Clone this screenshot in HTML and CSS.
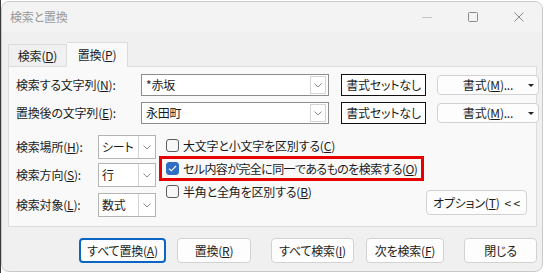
FILE: index.html
```html
<!DOCTYPE html>
<html lang="ja">
<head>
    <meta charset="UTF-8">
    <title>検索と置換</title>
    <link rel="stylesheet" href="styles.css">
</head>
<body>
    <div class="window">
        <div class="titlebar">
            <span class="title">検索と置換</span>
            <div class="controls">
                <span class="ctl"><svg width="10" height="10" viewBox="0 0 10 10"><path d="M0 5.5h10" stroke="#c4c4c4" stroke-width="1"/></svg></span>
                <span class="ctl"><svg width="10" height="10" viewBox="0 0 10 10"><rect x="0.5" y="0.5" width="9" height="9" rx="1" fill="none" stroke="#8a8a8a"/></svg></span>
                <span class="ctl"><svg width="10" height="10" viewBox="0 0 10 10"><path d="M0.5 0.5l9 9M9.5 0.5l-9 9" stroke="#8a8a8a" stroke-width="1"/></svg></span>
            </div>
        </div>

        <div class="main">
            <div class="tabs">
                <div class="tab">検索(<u>D</u>)</div>
                <div class="tab active">置換(<u>P</u>)</div>
            </div>

            <div class="panel">
                <div class="text-rows">
                    <div class="label">検索する文字列(<u>N</u>):</div>
                    <div class="combo"><span class="combo-text">*赤坂</span><span class="combo-arrow"><svg width="8" height="5" viewBox="0 0 8 5"><path d="M0.5 0.5l3.5 3.5 3.5-3.5" fill="none" stroke="#8a8a8a"/></svg></span></div>
                    <div class="fmt-none">書式セットなし</div>
                    <div class="fmt-btn"><span>書式(<u>M</u>)...</span><span class="caret"></span></div>

                    <div class="label">置換後の文字列(<u>E</u>):</div>
                    <div class="combo"><span class="combo-text">永田町</span><span class="combo-arrow"><svg width="8" height="5" viewBox="0 0 8 5"><path d="M0.5 0.5l3.5 3.5 3.5-3.5" fill="none" stroke="#8a8a8a"/></svg></span></div>
                    <div class="fmt-none">書式セットなし</div>
                    <div class="fmt-btn"><span>書式(<u>M</u>)...</span><span class="caret"></span></div>
                </div>

                <div class="options">
                    <div class="selects">
                        <div class="sel-row">
                            <div class="sel-label">検索場所(<u>H</u>):</div>
                            <div class="select"><span class="select-text">シート</span><span class="select-arrow"><svg width="8" height="5" viewBox="0 0 8 5"><path d="M0.5 0.5l3.5 3.5 3.5-3.5" fill="none" stroke="#8a8a8a"/></svg></span></div>
                        </div>
                        <div class="sel-row">
                            <div class="sel-label">検索方向(<u>S</u>):</div>
                            <div class="select"><span class="select-text">行</span><span class="select-arrow"><svg width="8" height="5" viewBox="0 0 8 5"><path d="M0.5 0.5l3.5 3.5 3.5-3.5" fill="none" stroke="#8a8a8a"/></svg></span></div>
                        </div>
                        <div class="sel-row">
                            <div class="sel-label">検索対象(<u>L</u>):</div>
                            <div class="select"><span class="select-text">数式</span><span class="select-arrow"><svg width="8" height="5" viewBox="0 0 8 5"><path d="M0.5 0.5l3.5 3.5 3.5-3.5" fill="none" stroke="#8a8a8a"/></svg></span></div>
                        </div>
                    </div>

                    <div class="checks">
                        <div class="check first"><span class="box"></span>大文字と小文字を区別する(<u>C</u>)</div>
                        <div class="check marked"><span class="box on"><svg width="9" height="7" viewBox="0 0 9 7"><path d="M1 3.6l2.3 2.2L8 1" fill="none" stroke="#fff" stroke-width="1.1"/></svg></span>セル内容が完全に同一であるものを検索する(<u>O</u>)</div>
                        <div class="check last"><span class="box"></span>半角と全角を区別する(<u>B</u>)</div>
                    </div>

                    <div class="opt-btn">オプション(<u>T</u>) &nbsp;&lt; &lt;</div>
                </div>
            </div>

            <div class="actions">
                <div class="btn default btn-all">すべて置換(<u>A</u>)</div>
                <div class="btn btn-one">置換(<u>R</u>)</div>
                <div class="btn btn-find-all">すべて検索(<u>I</u>)</div>
                <div class="btn btn-next">次を検索(<u>F</u>)</div>
                <div class="btn btn-close">閉じる</div>
            </div>
        </div>
    </div>
</body>
</html>
```

FILE: styles.css
```css
body {
    margin: 0;
    padding: 1px 0 0 0;
    background: #ffffff;
    border-left: 1px solid #3a3a3a;
    height: 272px;
    font-family: "Noto Sans CJK JP", sans-serif;
    font-size: 12px;
    font-feature-settings: "palt";
    letter-spacing: -0.2px;
    color: #1b1b1b;
    white-space: nowrap;
}

u {
    text-decoration: underline;
    text-underline-offset: 1px;
}

.window {
    width: 540px;
    height: 269px;
    border: 1px solid #c9c9c9;
    border-radius: 8px;
    background: #f0f0f0;
    overflow: hidden;
}

.titlebar {
    height: 30px;
    display: flex;
    align-items: center;
    background: #f3f3f3;
    padding-left: 8px;
}

.title {
    color: #9a9a9a;
    line-height: 16px;
}

.controls {
    margin-left: auto;
    display: flex;
}

.ctl {
    width: 46px;
    height: 30px;
    display: flex;
    align-items: center;
    justify-content: center;
}

.main {
    padding: 0 5px 0 6px;
}

.tabs {
    display: flex;
    align-items: flex-end;
    height: 25px;
    margin-top: 9px;
}

.tab {
    width: 59px;
    height: 22px;
    line-height: 22px;
    text-align: center;
    border: 1px solid #dcdcdc;
    border-bottom: none;
    box-sizing: border-box;
    background: #f0f0f0;
}

.tab.active {
    width: 61px;
    height: 25px;
    line-height: 24px;
    background: #f9f9f9;
    border-left: none;
    margin-bottom: -1px;
    position: relative;
}

.panel {
    height: 161px;
    box-sizing: border-box;
    border: 1px solid #dcdcdc;
    background: #f9f9f9;
    padding: 7px 9px 0 7px;
}

.text-rows {
    display: grid;
    grid-template-columns: 113px 188px 85px 101px;
    grid-auto-rows: 22px;
    column-gap: 12px;
    row-gap: 6px;
    align-items: center;
}

.text-rows .fmt-btn {
    margin-left: -1px;
}

.label {
    line-height: 22px;
}

.combo {
    height: 22px;
    box-sizing: border-box;
    border: 1px solid #8c8c8c;
    background: #ffffff;
    display: flex;
}

.combo-text {
    flex: 1;
    padding-left: 4px;
    line-height: 20px;
}

.combo-arrow {
    width: 14px;
    margin: 1px 2px 1px 0;
    border: 1px solid #d4d4d4;
    display: flex;
    align-items: center;
    justify-content: center;
}

.fmt-none {
    height: 22px;
    box-sizing: border-box;
    border: 1.5px solid #111111;
    background: #ffffff;
    line-height: 19px;
    text-align: center;
}

.fmt-btn {
    height: 20px;
    box-sizing: border-box;
    border: 1px solid #d2d2d2;
    border-radius: 4px;
    background: #fdfdfd;
    display: flex;
    align-items: center;
    justify-content: center;
    position: relative;
    line-height: 18px;
}

.caret {
    position: absolute;
    right: 4px;
    top: 8px;
    border-left: 3px solid transparent;
    border-right: 3px solid transparent;
    border-top: 3px solid #222222;
}

.options {
    display: flex;
    margin-top: 10px;
}

.selects {
    display: flex;
    flex-direction: column;
    gap: 4px;
    padding-top: 1px;
}

.sel-row {
    display: flex;
    align-items: center;
}

.sel-row:last-child {
    margin-top: 2px;
}

.sel-label {
    width: 82px;
    line-height: 24px;
}

.select {
    width: 58px;
    height: 24px;
    box-sizing: border-box;
    border: 1px solid #b4b4b4;
    background: #ffffff;
    display: flex;
}

.select-text {
    flex: 1;
    padding-left: 3px;
    line-height: 22px;
}

.select-arrow {
    width: 16px;
    border-left: 1px solid #d4d4d4;
    display: flex;
    align-items: center;
    justify-content: center;
}

.checks {
    margin-left: 3px;
    display: flex;
    flex-direction: column;
    align-items: flex-start;
}

.check {
    display: flex;
    align-items: center;
    padding-left: 7px;
}

.check.first {
    height: 22px;
}

.check.marked {
    height: 25px;
    box-sizing: border-box;
    border: 3px solid #e60000;
    padding-left: 4px;
    padding-right: 4px;
    letter-spacing: -0.6px;
}

.check.last {
    height: 20px;
}

.box {
    width: 13px;
    height: 13px;
    box-sizing: border-box;
    border: 1px solid #5c5c5c;
    border-radius: 3px;
    background: #f7f7f7;
    margin-right: 4px;
    display: flex;
    align-items: center;
    justify-content: center;
}

.box.on {
    border-color: #2f70c2;
    background: #2f70c2;
}

.opt-btn {
    margin-left: auto;
    align-self: flex-end;
    margin-bottom: 2px;
    width: 101px;
    height: 25px;
    box-sizing: border-box;
    border: 1px solid #d2d2d2;
    border-radius: 4px;
    background: #fdfdfd;
    line-height: 23px;
    text-align: center;
}

.actions {
    display: flex;
    justify-content: flex-end;
    margin-top: 11px;
}

.btn {
    height: 25px;
    box-sizing: border-box;
    border: 1px solid #d2d2d2;
    border-radius: 4px;
    background: #fdfdfd;
    line-height: 23px;
    text-align: center;
}

.btn.default {
    border: 2px solid #0a66c2;
    line-height: 21px;
}

.btn-all {
    width: 87px;
}

.btn-one {
    width: 74px;
    margin-left: 11px;
}

.btn-find-all {
    width: 83px;
    margin-left: 20px;
}

.btn-next {
    width: 78px;
    margin-left: 12px;
}

.btn-close {
    width: 73px;
    margin-left: 20px;
}
```
